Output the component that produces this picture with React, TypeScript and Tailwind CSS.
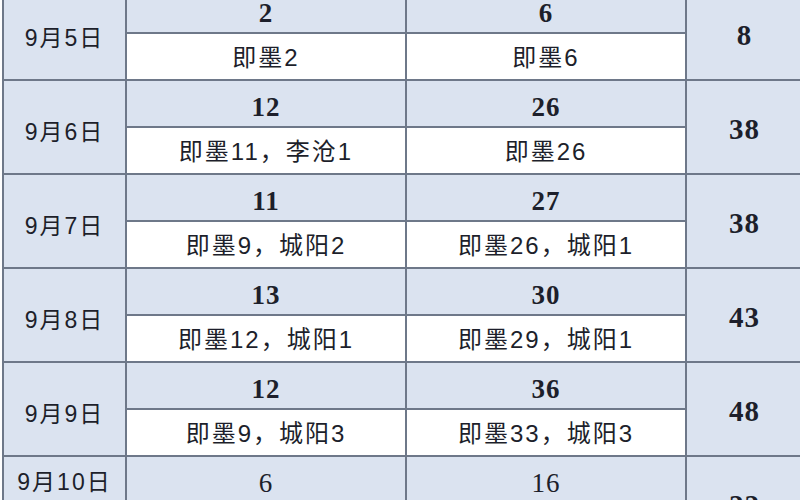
import React from 'react';

type Row = {
  date: string;
  a: string;
  aNote: string;
  b: string;
  bNote: string;
  total: string;
  last?: boolean;
};

const rows: Row[] = [
  { date: '9月5日', a: '2', aNote: '即墨2', b: '6', bNote: '即墨6', total: '8' },
  { date: '9月6日', a: '12', aNote: '即墨11，李沧1', b: '26', bNote: '即墨26', total: '38' },
  { date: '9月7日', a: '11', aNote: '即墨9，城阳2', b: '27', bNote: '即墨26，城阳1', total: '38' },
  { date: '9月8日', a: '13', aNote: '即墨12，城阳1', b: '30', bNote: '即墨29，城阳1', total: '43' },
  { date: '9月9日', a: '12', aNote: '即墨9，城阳3', b: '36', bNote: '即墨33，城阳3', total: '48' },
  { date: '9月10日', a: '6', aNote: '即墨6', b: '16', bNote: '即墨16', total: '22', last: true },
];

const sans = "font-['Liberation_Sans','Noto_Sans_CJK_SC',sans-serif]";
const serif = "font-['Liberation_Serif','Noto_Sans_CJK_SC',serif]";
const cell = 'border-2 border-[#6e7889] text-center px-0 pb-0 text-[#1d1f2b] leading-none';

export default function App() {
  return (
    <div className="h-[500px] w-[800px] overflow-hidden bg-white">
      <table className="-mt-[15px] ml-[2px] w-[800px] table-fixed border-collapse">
        <colgroup>
          <col className="w-[123px]" />
          <col className="w-[280px]" />
          <col className="w-[280px]" />
          <col className="w-[117px]" />
        </colgroup>
        <tbody>
          {rows.map((r) => (
            <React.Fragment key={r.date}>
              <tr className="h-[47px]">
                <td
                  rowSpan={2}
                  className={`${cell} ${sans} bg-[#dbe3f0] text-[23px] tracking-[2px] ${r.last ? 'align-top pt-[14px]' : 'align-middle pt-[10px]'}`}
                >
                  {r.date}
                </td>
                <td className={`${cell} ${serif} bg-[#dbe3f0] align-middle pt-[8px] text-[27px] tracking-[1px] ${r.last ? 'font-normal' : 'font-bold'}`}>
                  {r.a}
                </td>
                <td className={`${cell} ${serif} bg-[#dbe3f0] align-middle pt-[8px] text-[27px] tracking-[1px] ${r.last ? 'font-normal' : 'font-bold'}`}>
                  {r.b}
                </td>
                <td rowSpan={2} className={`${cell} ${serif} bg-[#dbe3f0] align-middle pt-[5px] text-[29px] font-bold tracking-[1px]`}>
                  {r.total}
                </td>
              </tr>
              <tr className="h-[47px]">
                <td className={`${cell} ${sans} bg-white align-middle pt-[3px] text-[24px] tracking-[2px]`}>{r.aNote}</td>
                <td className={`${cell} ${sans} bg-white align-middle pt-[3px] text-[24px] tracking-[2px]`}>{r.bNote}</td>
              </tr>
            </React.Fragment>
          ))}
        </tbody>
      </table>
    </div>
  );
}
